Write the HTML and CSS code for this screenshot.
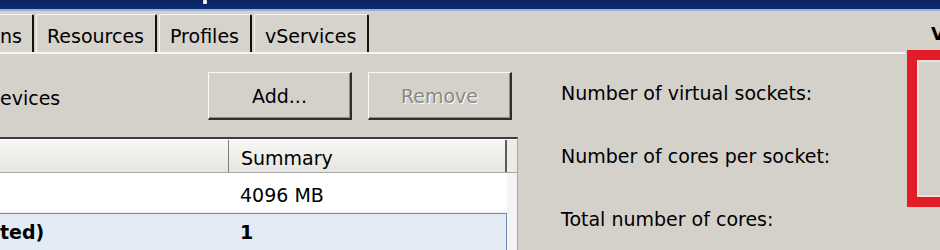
FILE: index.html
```html
<!DOCTYPE html>
<html>
<head>
<meta charset="utf-8">
<link rel="stylesheet" href="styles.css">
</head>
<body>
<div class="screen">
  <div class="titlebar"><span class="dot"></span></div>
  <div class="tabstrip">
    <div class="tab tab-first">ns</div>
    <div class="tab">Resources</div>
    <div class="tab">Profiles</div>
    <div class="tab">vServices</div>
    <span class="edge-text">V</span>
  </div>
  <div class="content">
    <div class="left">
      <div class="toolbar">
        <span class="section">evices</span>
        <div class="buttons">
          <button class="btn">Add...</button>
          <button class="btn disabled">Remove</button>
        </div>
      </div>
      <div class="table">
        <div class="row head">
          <div class="cell c1"></div>
          <div class="cell c2">Summary</div>
          <div class="cell c3"></div>
        </div>
        <div class="row r1">
          <div class="cell c1"></div>
          <div class="cell c2">4096 MB</div>
          <div class="cell c3"></div>
        </div>
        <div class="row r2">
          <div class="sel">
            <div class="cell c1">ted)</div>
            <div class="cell c2">1</div>
          </div>
          <div class="cell c3"></div>
        </div>
      </div>
    </div>
    <div class="right">
      <div class="label">Number of virtual sockets:</div>
      <div class="label">Number of cores per socket:</div>
      <div class="label">Total number of cores:</div>
    </div>
  </div>
  <div class="highlight"></div>
</div>
</body>
</html>
```
FILE: styles.css
```css
html, body {
  margin: 0;
  padding: 0;
}
body {
  width: 940px;
  height: 250px;
  overflow: hidden;
  background: #d4d1cb;
  font-family: "DejaVu Sans", "Noto Sans", sans-serif;
  font-size: 19px;
  color: #000;
}
.screen {
  position: relative;
  width: 940px;
  height: 250px;
  overflow: hidden;
}
.titlebar {
  height: 9px;
  background: linear-gradient(#0b2260, #0c2b72);
  border-bottom: 2px solid #9fb0d8;
  display: flex;
  padding-left: 203px;
}
.dot {
  width: 4px;
  height: 4px;
  background: #f4f4f4;
  border-radius: 1px;
}
.tabstrip {
  display: flex;
  align-items: flex-end;
  gap: 2px;
  height: 41px;
  border-bottom: 2px solid #f6f5f1;
  width: 905px;
  overflow: visible;
}
.tab {
  height: 32px;
  line-height: 32px;
  padding: 5px 11px 0 10px;
  border-left: 1px solid #f7f6f2;
  border-top: 1px solid #f7f6f2;
  border-right: 2px solid #111;
  border-radius: 2px 2px 0 0;
  background: #d6d3cd;
}
.tab-first {
  border-left: none;
  padding-left: 0;
  padding-right: 10px;
  border-top-left-radius: 0;
}
.edge-text {
  margin-left: auto;
  margin-right: -40px;
  align-self: flex-start;
  padding-top: 13px;
  font-weight: bold;
  font-size: 18px;
  line-height: 20px;
}
.content {
  display: flex;
  gap: 43px;
}
.left {
  width: 518px;
}
.toolbar {
  display: flex;
  align-items: center;
  padding-top: 18px;
}
.section {
  width: 208px;
  padding-top: 4px;
}
.buttons {
  display: flex;
  gap: 16px;
}
.btn {
  width: 144px;
  height: 48px;
  font-family: inherit;
  font-size: 19px;
  color: #000;
  background: #d4d1cb;
  border-style: solid;
  border-width: 1px 2px 2px 1px;
  border-color: #fbfaf7 #2e2e2e #2e2e2e #fbfaf7;
  box-shadow: inset -1px -1px 0 #8c8a86;
  padding: 0;
}
.btn.disabled {
  color: #8a8884;
  text-shadow: 1px 1px 0 #fff;
}
.table {
  margin-top: 17px;
  width: 517px;
  border-top: 2px solid #3c3c3c;
  border-right: 1px solid #a9a7a2;
  background: #fff;
}
.row {
  display: flex;
}
.cell {
  white-space: nowrap;
}
.c1 { width: 228px; }
.c2 { width: 279px; box-sizing: border-box; padding-left: 12px; }
.c3 { width: 10px; background: #f4f4f2; }
.head {
  margin-top: 1px;
  height: 32px;
  background: linear-gradient(#f7f7f5, #e6e5e1);
  border-bottom: 1px solid #a8a7a3;
}
.head .cell {
  padding-top: 4px;
  line-height: 28px;
}
.head .c2 {
  border-left: 1px solid #7e7d7a;
  border-right: 2px solid #5c5b58;
  width: 279px;
}
.head .c3 {
  background: #ecebe7;
}
.r1 .cell {
  height: 39px;
  padding-top: 6px;
  box-sizing: border-box;
  line-height: 33px;
}
.r1 {
  border-bottom: 1px solid #f0f0f0;
}
.r2 {
  height: 40px;
}
.sel {
  display: flex;
  width: 507px;
  box-sizing: border-box;
  background: #e3ebf6;
  border: 1px solid #6f8caf;
  border-left: none;
  font-weight: bold;
  line-height: 36px;
}
.sel .c1 { width: 228px; }
.sel .c2 { width: 278px; }
.right {
  padding-top: 8px;
}
.label {
  line-height: 63px;
  white-space: nowrap;
}
.highlight {
  position: absolute;
  left: 907px;
  top: 50px;
  width: 60px;
  height: 137px;
  border: 10px solid #e21d27;
  box-shadow: inset 0 0 0 2px #f3dcda;
}
```
